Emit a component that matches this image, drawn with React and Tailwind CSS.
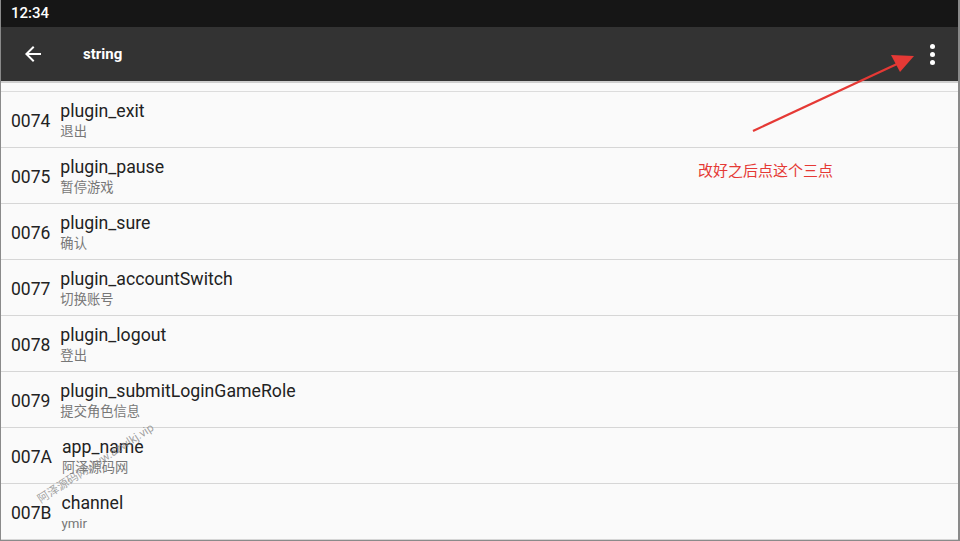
import React from 'react';

const rows = [
  { id: '0074', name: 'plugin_exit', value: '退出' },
  { id: '0075', name: 'plugin_pause', value: '暂停游戏' },
  { id: '0076', name: 'plugin_sure', value: '确认' },
  { id: '0077', name: 'plugin_accountSwitch', value: '切换账号' },
  { id: '0078', name: 'plugin_logout', value: '登出' },
  { id: '0079', name: 'plugin_submitLoginGameRole', value: '提交角色信息' },
  { id: '007A', name: 'app_name', value: '阿泽源码网' },
  { id: '007B', name: 'channel', value: 'ymir' },
];

const font = { fontFamily: 'Roboto, "Noto Sans CJK SC", sans-serif' };

const Row = ({ row }) => (
  <div className="flex h-[56px] shrink-0 items-center border-b border-[#d6d6d6] pl-[10px] pt-[2px]">
    <span className="pt-[2px] text-[17.5px] text-[#222]">{row.id}</span>
    <div className="ml-[10px] flex flex-col pt-[1px]">
      <span className="text-[17.7px] leading-[20px] text-[#222]">{row.name}</span>
      <span className="mt-[1px] text-[13.3px] leading-[19px] text-[#777]">{row.value}</span>
    </div>
  </div>
);

export default function App() {
  return (
    <div
      className="relative flex h-[541px] w-[960px] flex-col overflow-hidden border-b border-l border-r-2 border-[#8a8a8a] bg-[#fafafa]"
      style={font}
    >
      {/* Status bar */}
      <div className="flex h-[27px] shrink-0 items-center bg-[#161616] pl-[10px] text-[15px] font-medium text-white">
        12:34
      </div>

      {/* Toolbar */}
      <div className="flex h-[54px] shrink-0 items-center bg-[#333333] text-white">
        <svg className="ml-[20px]" width="24" height="24" viewBox="0 0 24 24">
          <path d="M20 11H7.83l5.59-5.59L12 4l-8 8 8 8 1.41-1.41L7.83 13H20v-2z" fill="#fff" />
        </svg>
        <span className="ml-[38px] text-[15px] font-bold">string</span>
        <div className="ml-auto mr-[23px] flex flex-col gap-[3px]">
          <span className="h-[5px] w-[5px] rounded-full bg-white" />
          <span className="h-[5px] w-[5px] rounded-full bg-white" />
          <span className="h-[5px] w-[5px] rounded-full bg-white" />
        </div>
      </div>

      {/* Partial previous row */}
      <div className="h-[11px] shrink-0 border-t-2 border-b border-t-[#cfcfcf] border-b-[#dcdcdc] bg-[#fafafa]" />

      {rows.map((row) => (
        <Row key={row.id} row={row} />
      ))}

      {/* Annotation */}
      <svg className="absolute left-0 top-0" width="960" height="541">
        <line x1="752" y1="131" x2="896" y2="64" stroke="#e53935" strokeWidth="2.2" />
        <polygon points="913,56 890,55 899,72" fill="#e53935" />
      </svg>
      <span className="absolute left-[697px] top-[160px] text-[15px] text-[#e53935]">
        改好之后点这个三点
      </span>

      {/* Watermark */}
      <span className="absolute left-[38px] top-[492px] origin-left -rotate-[33deg] whitespace-nowrap text-[11.5px] text-[#8a8a8a]/80">
        阿泽源码网www.azwlkj.vip
      </span>
    </div>
  );
}
